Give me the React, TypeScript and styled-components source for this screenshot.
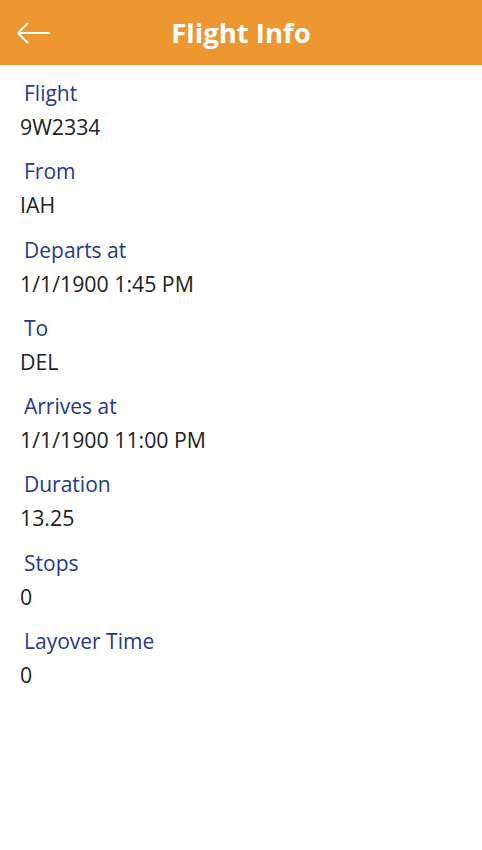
import React from "react";
import styled, { createGlobalStyle } from "styled-components";

const Global = createGlobalStyle`
  html, body { margin: 0; padding: 0; background: #fff; }
  body { font-family: "Open Sans", "Noto Sans", sans-serif; }
`;

const Page = styled.div`
  width: 482px;
  min-height: 850px;
  background: #fff;
`;

const Header = styled.header`
  height: 65px;
  background: #ec972f;
  display: flex;
  align-items: center;
  justify-content: center;
  position: relative;
`;

const BackButton = styled.button`
  position: absolute;
  left: 14px;
  top: 18px;
  width: 38px;
  height: 30px;
  border: 0;
  background: transparent;
  padding: 0;
  display: flex;
  align-items: center;
  justify-content: center;
  cursor: pointer;
`;

const Title = styled.h1`
  margin: 0;
  color: #fff;
  font-size: 27.5px;
  font-weight: 700;
  line-height: 1;
`;

const Content = styled.main`
  padding: 13px 0 0 0;
  display: flex;
  flex-direction: column;
`;

const Group = styled.section`
  display: flex;
  flex-direction: column;
  margin-bottom: 14.3px;
`;

const Label = styled.div`
  color: #26388c;
  font-size: 21px;
  line-height: 30px;
  margin-bottom: 4px;
  padding-left: 24px;
`;

const Value = styled.div`
  color: #222;
  font-size: 21.3px;
  line-height: 30px;
  padding-left: 20px;
`;

const fields: [string, string][] = [
  ["Flight", "9W2334"],
  ["From", "IAH"],
  ["Departs at", "1/1/1900 1:45 PM"],
  ["To", "DEL"],
  ["Arrives at", "1/1/1900 11:00 PM"],
  ["Duration", "13.25"],
  ["Stops", "0"],
  ["Layover Time", "0"],
];

export default function App() {
  return (
    <Page>
      <Global />
      <Header>
        <BackButton aria-label="Back">
          <svg width="34" height="22" viewBox="0 0 34 22" fill="none">
            <path d="M2 11 H34 M2 11 L12 1 M2 11 L12 21" stroke="#fff" strokeWidth="2" />
          </svg>
        </BackButton>
        <Title>Flight Info</Title>
      </Header>
      <Content>
        {fields.map(([l, v]) => (
          <Group key={l}>
            <Label>{l}</Label>
            <Value>{v}</Value>
          </Group>
        ))}
      </Content>
    </Page>
  );
}
